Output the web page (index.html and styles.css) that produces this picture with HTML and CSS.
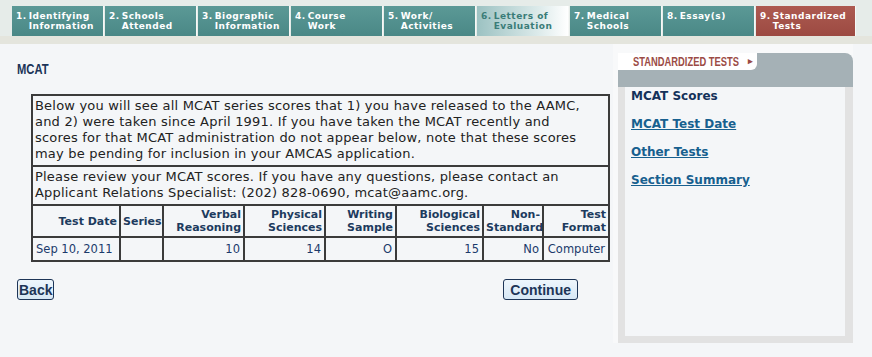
FILE: index.html
```html
<!DOCTYPE html>
<html lang="en">
<head>
    <meta charset="UTF-8">
    <title>AMCAS - Standardized Tests</title>
    <link rel="stylesheet" href="styles.css">
</head>
<body>
    <!-- Section tabs -->
    <div class="tabbar">
        <div class="tab"><span class="num">1.</span><span class="label">Identifying<br>Information</span></div>
        <div class="tab"><span class="num">2.</span><span class="label">Schools<br>Attended</span></div>
        <div class="tab"><span class="num">3.</span><span class="label">Biographic<br>Information</span></div>
        <div class="tab"><span class="num">4.</span><span class="label">Course<br>Work</span></div>
        <div class="tab"><span class="num">5.</span><span class="label">Work/<br>Activities</span></div>
        <div class="tab tab-light"><span class="num">6.</span><span class="label">Letters of<br>Evaluation</span></div>
        <div class="tab"><span class="num">7.</span><span class="label">Medical<br>Schools</span></div>
        <div class="tab"><span class="num">8.</span><span class="label">Essay(s)</span></div>
        <div class="tab tab-active"><span class="num">9.</span><span class="label">Standardized<br>Tests</span></div>
    </div>
    <div class="band"></div>

    <div class="page">
        <div class="main">
            <h2 class="section-title"><span class="narrow">MCAT</span></h2>

            <table class="scores">
                <colgroup>
                    <col class="c-date">
                    <col class="c-series">
                    <col class="c-verbal">
                    <col class="c-phys">
                    <col class="c-writing">
                    <col class="c-bio">
                    <col class="c-nonstd">
                    <col class="c-format">
                </colgroup>
                <tr>
                    <td colspan="8" class="note">Below you will see all MCAT series scores that 1) you have released to the AAMC,<br>and 2) were taken since April 1991. If you have taken the MCAT recently and<br>scores for that MCAT administration do not appear below, note that these scores<br>may be pending for inclusion in your AMCAS application.</td>
                </tr>
                <tr>
                    <td colspan="8" class="note">Please review your MCAT scores. If you have any questions, please contact an<br>Applicant Relations Specialist: (202) 828-0690, mcat@aamc.org.</td>
                </tr>
                <tr class="head">
                    <th>Test Date</th>
                    <th>Series</th>
                    <th>Verbal Reasoning</th>
                    <th>Physical Sciences</th>
                    <th>Writing Sample</th>
                    <th>Biological Sciences</th>
                    <th>Non-<br>Standard</th>
                    <th>Test Format</th>
                </tr>
                <tr class="data">
                    <td class="left">Sep 10, 2011</td>
                    <td></td>
                    <td>10</td>
                    <td>14</td>
                    <td>O</td>
                    <td>15</td>
                    <td>No</td>
                    <td>Computer</td>
                </tr>
            </table>

            <div class="nav-buttons">
                <button class="nav-btn">Back</button>
                <button class="nav-btn nav-btn-wide">Continue</button>
            </div>
        </div>

        <!-- Sidebar -->
        <div class="side">
            <div class="side-head">
                <div class="side-tab"><span class="narrow">STANDARDIZED TESTS</span><span class="arrow">&#9656;</span></div>
            </div>
            <div class="side-body">
                <span class="side-link current">MCAT Scores</span>
                <a class="side-link" href="#">MCAT Test Date</a>
                <a class="side-link" href="#">Other Tests</a>
                <a class="side-link" href="#">Section Summary</a>
            </div>
        </div>
    </div>
</body>
</html>
```

FILE: styles.css
```css
/* Base */
body {
    margin: 0;
    background: #f4f6f8;
    font-family: "DejaVu Sans", Verdana, sans-serif;
    color: #222;
}

.narrow {
    display: inline-block;
    white-space: nowrap;
    transform-origin: left center;
}

/* Tabs */
.tabbar {
    display: flex;
    height: 30px;
    padding: 6px 0 0 12px;
    background: #e6ece9;
}

.tab {
    display: flex;
    flex: none;
    width: 91px;
    height: 30px;
    padding: 5px 0 0 4px;
    box-sizing: border-box;
    margin-right: 2px;
    background: linear-gradient(to bottom, #5b9996, #4a8886);
    color: #fff;
    font-size: 9px;
    font-weight: bold;
    line-height: 10px;
    letter-spacing: 0.5px;
    box-shadow: 1px 0 0 #f6f8f6;
}

.tab .num {
    margin-right: 2px;
}

.tab-light {
    background: linear-gradient(to right, #9cc2c2, #dfecec 70%, #ffffff);
    color: #3a7c78;
}

.tab-active {
    width: 99px;
    background: linear-gradient(to bottom, #ad5a51, #9c4a42);
}

.band {
    height: 8px;
    background: #e4e5dd;
}

/* Layout */
.page {
    display: flex;
}

.main {
    width: 613px;
    flex: none;
}

.section-title {
    margin: 18px 0 0 17px;
    font-family: "Liberation Sans", Arial, sans-serif;
    font-size: 14px;
    line-height: 14px;
    color: #1b3458;
}

.section-title .narrow {
    transform: scaleX(0.8);
}

/* Scores table */
.scores {
    margin: 18px 0 0 31px;
    width: 577px;
    table-layout: fixed;
    border-collapse: collapse;
    border: 2px solid #3b3b3b;
}

.c-date { width: 88px; }
.c-series { width: 43px; }
.c-verbal { width: 81px; }
.c-phys { width: 81px; }
.c-writing { width: 71px; }
.c-bio { width: 87px; }
.c-nonstd { width: 60px; }
.c-format { width: 66px; }

.scores td,
.scores th {
    border: 2px solid #3b3b3b;
    padding: 2px 3px;
}

.scores .note {
    font-size: 13px;
    line-height: 16px;
    letter-spacing: 0.2px;
    color: #222;
    padding: 2px 2px 3px 2px;
}

.scores th {
    font-size: 11px;
    line-height: 13px;
    text-align: right;
    color: #1d3b5e;
    padding: 2px 2px;
}

.scores .data td {
    font-size: 11.5px;
    line-height: 20px;
    text-align: right;
    white-space: nowrap;
    color: #1b3a6b;
    padding: 1px 3px;
}

.scores .data td.left {
    text-align: left;
}

/* Buttons */
.nav-buttons {
    display: flex;
    justify-content: space-between;
    width: 561px;
    margin: 17px 0 0 17px;
}

.nav-btn {
    height: 21px;
    padding: 0 1px;
    border: 1px solid #1d3557;
    border-radius: 3px;
    background: linear-gradient(to bottom, #eef6fc, #d6e7f5);
    color: #1d3557;
    font-family: "Liberation Sans", Arial, sans-serif;
    font-size: 14px;
    font-weight: bold;
}

.nav-btn-wide {
    padding: 0 6px;
}

/* Sidebar */
.side {
    width: 235px;
    flex: none;
    padding-top: 9px;
    border-left: 5px solid #f8f9fa;
    background: #f8f9fa;
}

.side-head {
    height: 34px;
    background: #a5b1b6;
    border-top-right-radius: 8px;
}

.side-tab {
    display: flex;
    align-items: center;
    width: 124px;
    height: 17px;
    padding-left: 15px;
    background: #fff;
    border-bottom-right-radius: 6px;
    font-family: "Liberation Sans", Arial, sans-serif;
    font-size: 13px;
    font-weight: bold;
    line-height: 17px;
    color: #9b4b45;
}

.side-tab .narrow {
    width: 90px;
    transform: scaleX(0.72);
}

.side-tab .arrow {
    margin-left: 25px;
    font-size: 9px;
}

.side-body {
    height: 249px;
    padding-left: 6px;
    background: #f4f6f8;
    border: 7px solid #e2e2e2;
    border-top: none;
    border-right-width: 8px;
}

.side-link {
    display: block;
    margin-bottom: 10px;
    font-size: 12px;
    font-weight: bold;
    line-height: 18px;
    color: #17608f;
}

.side-link.current {
    color: #14325a;
}
```
